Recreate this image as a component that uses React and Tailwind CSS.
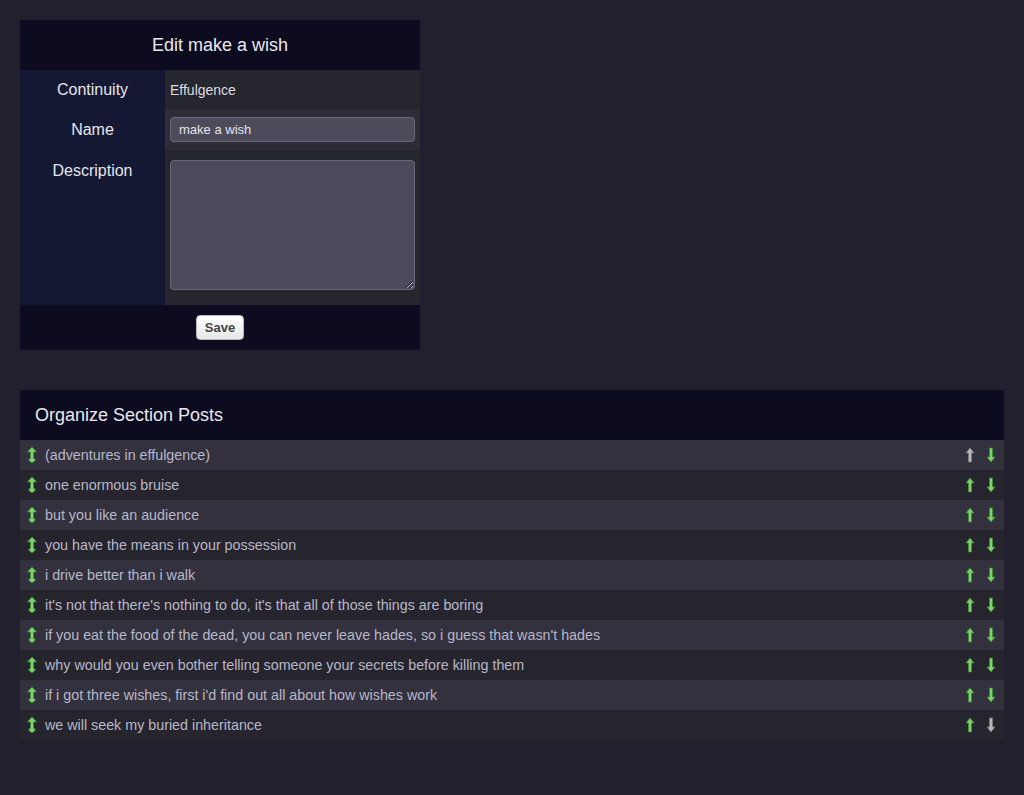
const posts = [
  '(adventures in effulgence)',
  'one enormous bruise',
  'but you like an audience',
  'you have the means in your possession',
  'i drive better than i walk',
  "it's not that there's nothing to do, it's that all of those things are boring",
  "if you eat the food of the dead, you can never leave hades, so i guess that wasn't hades",
  'why would you even bother telling someone your secrets before killing them',
  "if i got three wishes, first i'd find out all about how wishes work",
  'we will seek my buried inheritance',
];

// little raised-look arrow used for the ordering controls
const Arrow = ({ dir = 'up', muted = false }) => {
  const fill = muted ? '#b8b8b8' : '#7fd36f';
  const edge = muted ? '#7a7a7a' : '#3f8a36';
  const path = 'M5 1 L9 6 L6.5 6 L6.5 15 L3.5 15 L3.5 6 L1 6 Z';
  return (
    <svg width="10" height="16" viewBox="0 0 10 16" className={dir === 'down' ? 'rotate-180' : ''}>
      <path d={path} fill={fill} stroke={edge} strokeWidth="0.8" strokeLinejoin="round" />
    </svg>
  );
};

// "move to top" marker on the left of each row
const TopArrow = () => (
  <svg width="12" height="18" viewBox="0 0 12 18">
    <path
      d="M6 1 L10.5 6 L7.5 6 L7.5 12 L9.5 14 L6 17 L2.5 14 L4.5 12 L4.5 6 L1.5 6 Z"
      fill="#7fd36f"
      stroke="#3f8a36"
      strokeWidth="0.8"
      strokeLinejoin="round"
    />
  </svg>
);

export default function App() {
  return (
    <div className="min-h-[795px] bg-[#221f2e] p-5 font-['Liberation_Sans',Arial,sans-serif]">
      <div className="w-[400px]">
        <div className="h-[50px] bg-[#0c0b1f] flex items-center justify-center text-[18px] text-[#e8e8ec]">
          Edit make a wish
        </div>
        <div className="grid grid-cols-[145px_255px]">
          <div className="h-10 bg-[#141833] flex items-center justify-center text-[16px] text-[#e6e6ea]">Continuity</div>
          <div className="h-10 bg-[#26262e] flex items-center px-[5px] text-[14px] text-[#dcdce0]">Effulgence</div>
          <div className="h-10 bg-[#141833] flex items-center justify-center text-[16px] text-[#e6e6ea]">Name</div>
          <div className="h-10 bg-[#2e2d37] px-[5px] pt-[7px]">
            <input
              defaultValue="make a wish"
              className="block w-full h-[25px] rounded-[4px] border border-[#6a6778] bg-[#4d4a5c] px-2 text-[13px] text-[#e4e4ea] outline-none"
            />
          </div>
          <div className="h-[155px] bg-[#141833] flex justify-center pt-[9px] text-[16px] text-[#e6e6ea]">Description</div>
          <div className="h-[155px] bg-[#26262e] px-[5px] pt-[10px]">
            <textarea className="block w-full h-[130px] rounded-[4px] border border-[#6a6778] bg-[#4d4a5c] outline-none" />
          </div>
        </div>
        <div className="h-[45px] bg-[#0c0b1f] flex items-center justify-center">
          <button className="h-[25px] px-2 rounded-[4px] border border-[#b8b8b8] bg-gradient-to-b from-white to-[#e6e6e6] text-[13px] font-bold text-[#444]">
            Save
          </button>
        </div>
      </div>

      <div className="mt-10">
        <div className="h-[50px] bg-[#0c0b1f] flex items-center px-[15px] text-[18px] text-[#e8e8ec]">
          Organize Section Posts
        </div>
        {posts.map((title, i) => (
          <div
            key={title}
            className={`h-[30px] flex items-center pl-[6px] pr-[8px] text-[14.3px] text-[#b9b7c9] ${
              i % 2 === 0 ? 'bg-[#32313d]' : 'bg-[#26252e]'
            }`}
          >
            <TopArrow />
            <span className="ml-[7px] flex-1 pt-[1px]">{title}</span>
            <div className="flex items-center gap-[11px]">
              <Arrow dir="up" muted={i === 0} />
              <Arrow dir="down" muted={i === posts.length - 1} />
            </div>
          </div>
        ))}
      </div>
    </div>
  );
}
